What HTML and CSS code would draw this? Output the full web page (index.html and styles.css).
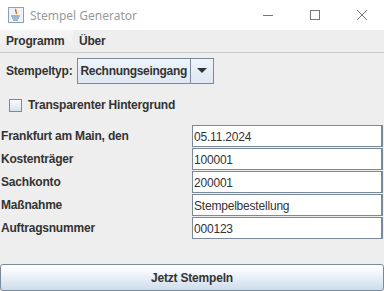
FILE: index.html
```html
<!DOCTYPE html>
<html lang="de">
<head>
  <meta charset="UTF-8" />
  <title>Stempel Generator</title>
  <link rel="stylesheet" href="styles.css">
</head>
<body>
  <div class="window">
    <div class="titlebar">
      <svg class="app-icon" width="16" height="16" viewBox="0 0 16 16">
        <rect x="0.5" y="0.5" width="15" height="15" fill="#eef3f8" stroke="#8aa0b8" />
        <path d="M8 2 C6 4 10 5 8 7" stroke="#e76f00" stroke-width="1.5" fill="none" />
        <path d="M3 9 H12 M4 11 H11 M5 13 H10" stroke="#5382a1" stroke-width="1.2" />
      </svg>
      <span class="title">Stempel Generator</span>
      <div class="controls">
        <svg width="12" height="12" viewBox="0 0 12 12"><path d="M1 6.5 H11" stroke="#777" /></svg>
        <svg width="12" height="12" viewBox="0 0 12 12"><rect x="1.5" y="1.5" width="9" height="9" fill="none" stroke="#777" /></svg>
        <svg width="12" height="12" viewBox="0 0 12 12"><path d="M1 1 L11 11 M11 1 L1 11" stroke="#777" /></svg>
      </div>
    </div>

    <div class="menubar">
      <span class="menu active">Programm</span>
      <span class="menu">Über</span>
    </div>

    <div class="content">
      <div class="type-row">
        <label class="label">Stempeltyp:</label>
        <div class="combo">
          <span class="combo-value">Rechnungseingang</span>
          <span class="combo-arrow">
            <svg width="10" height="6" viewBox="0 0 10 6"><path d="M0 0 H10 L5 5 Z" fill="#333" /></svg>
          </span>
        </div>
      </div>

      <div class="check-row">
        <span class="checkbox"></span>
        <span class="label">Transparenter Hintergrund</span>
      </div>

      <div class="form">
        <span class="label">Frankfurt am Main, den</span>
        <div class="field">05.11.2024</div>
        <span class="label">Kostenträger</span>
        <div class="field">100001</div>
        <span class="label">Sachkonto</span>
        <div class="field">200001</div>
        <span class="label">Maßnahme</span>
        <div class="field">Stempelbestellung</div>
        <span class="label">Auftragsnummer</span>
        <div class="field">000123</div>
      </div>
    </div>

    <button class="submit">Jetzt Stempeln</button>
  </div>
</body>
</html>
```

FILE: styles.css
```css
* {
  box-sizing: border-box;
  margin: 0;
  padding: 0;
}

body {
  font-family: 'Liberation Sans', Arial, sans-serif;
  font-size: 12px;
  letter-spacing: -0.2px;
  color: #333333;
  background-color: #eeeeee;
}

.window {
  display: flex;
  flex-direction: column;
  height: 291px;
}

.titlebar {
  display: flex;
  align-items: center;
  height: 30px;
  background: #ffffff;
  padding-left: 8px;
}

.title {
  font-family: 'Noto Sans', 'Open Sans', sans-serif;
  font-size: 12px;
  letter-spacing: 0;
  color: #9a9a9a;
  margin-left: 6px;
}

.controls {
  display: flex;
  margin-left: auto;
  gap: 35px;
  padding-right: 16px;
}

.menubar {
  display: flex;
  height: 23px;
  background: #eeeeee;
  border-bottom: 1px solid #c9c9c9;
}

.menu {
  font-weight: bold;
  font-size: 12px;
  padding: 4px 6px 0 6px;
}

.menu.active {
  background: linear-gradient(#f6f6f6, #ebebeb);
  width: 73px;
}

.content {
  flex: 1;
}

.label {
  font-weight: bold;
  color: #333333;
}

.type-row {
  display: flex;
  align-items: center;
  margin-top: 5px;
  padding-left: 6px;
  height: 26px;
}

.combo {
  display: flex;
  height: 26px;
  width: 137px;
  margin-left: 5px;
  border: 1px solid #7a8a99;
  background: linear-gradient(#eef4fa, #dde8f3);
}

.combo-value {
  flex: 1;
  font-weight: bold;
  letter-spacing: -0.3px;
  padding: 5px 0 0 2px;
  border-right: 1px solid #7a8a99;
  white-space: nowrap;
  overflow: hidden;
}

.combo-arrow {
  display: flex;
  align-items: center;
  justify-content: center;
  width: 22px;
}

.check-row {
  display: flex;
  align-items: center;
  gap: 6px;
  margin-top: 13px;
  padding-left: 9px;
  height: 16px;
}

.checkbox {
  width: 13px;
  height: 13px;
  border: 1px solid #7a8a99;
  background: linear-gradient(#fafcfe, #d5e1ee);
}

.form {
  display: grid;
  grid-template-columns: 192px 191px;
  row-gap: 1px;
  margin-top: 12px;
  align-items: center;
}

.form .label {
  padding-left: 1px;
}

.field {
  height: 22px;
  background: #ffffff;
  border: 1px solid #7a8a99;
  border-right-width: 2px;
  padding: 4px 0 0 1px;
  color: #333333;
}

.submit {
  height: 27px;
  width: 100%;
  font-family: 'Liberation Sans', Arial, sans-serif;
  font-size: 12px;
  font-weight: bold;
  letter-spacing: -0.2px;
  color: #333333;
  border: 1px solid #7a8a99;
  border-radius: 3px;
  background: linear-gradient(#ffffff, #f3f7fb 30%, #cddcec);
}
```
